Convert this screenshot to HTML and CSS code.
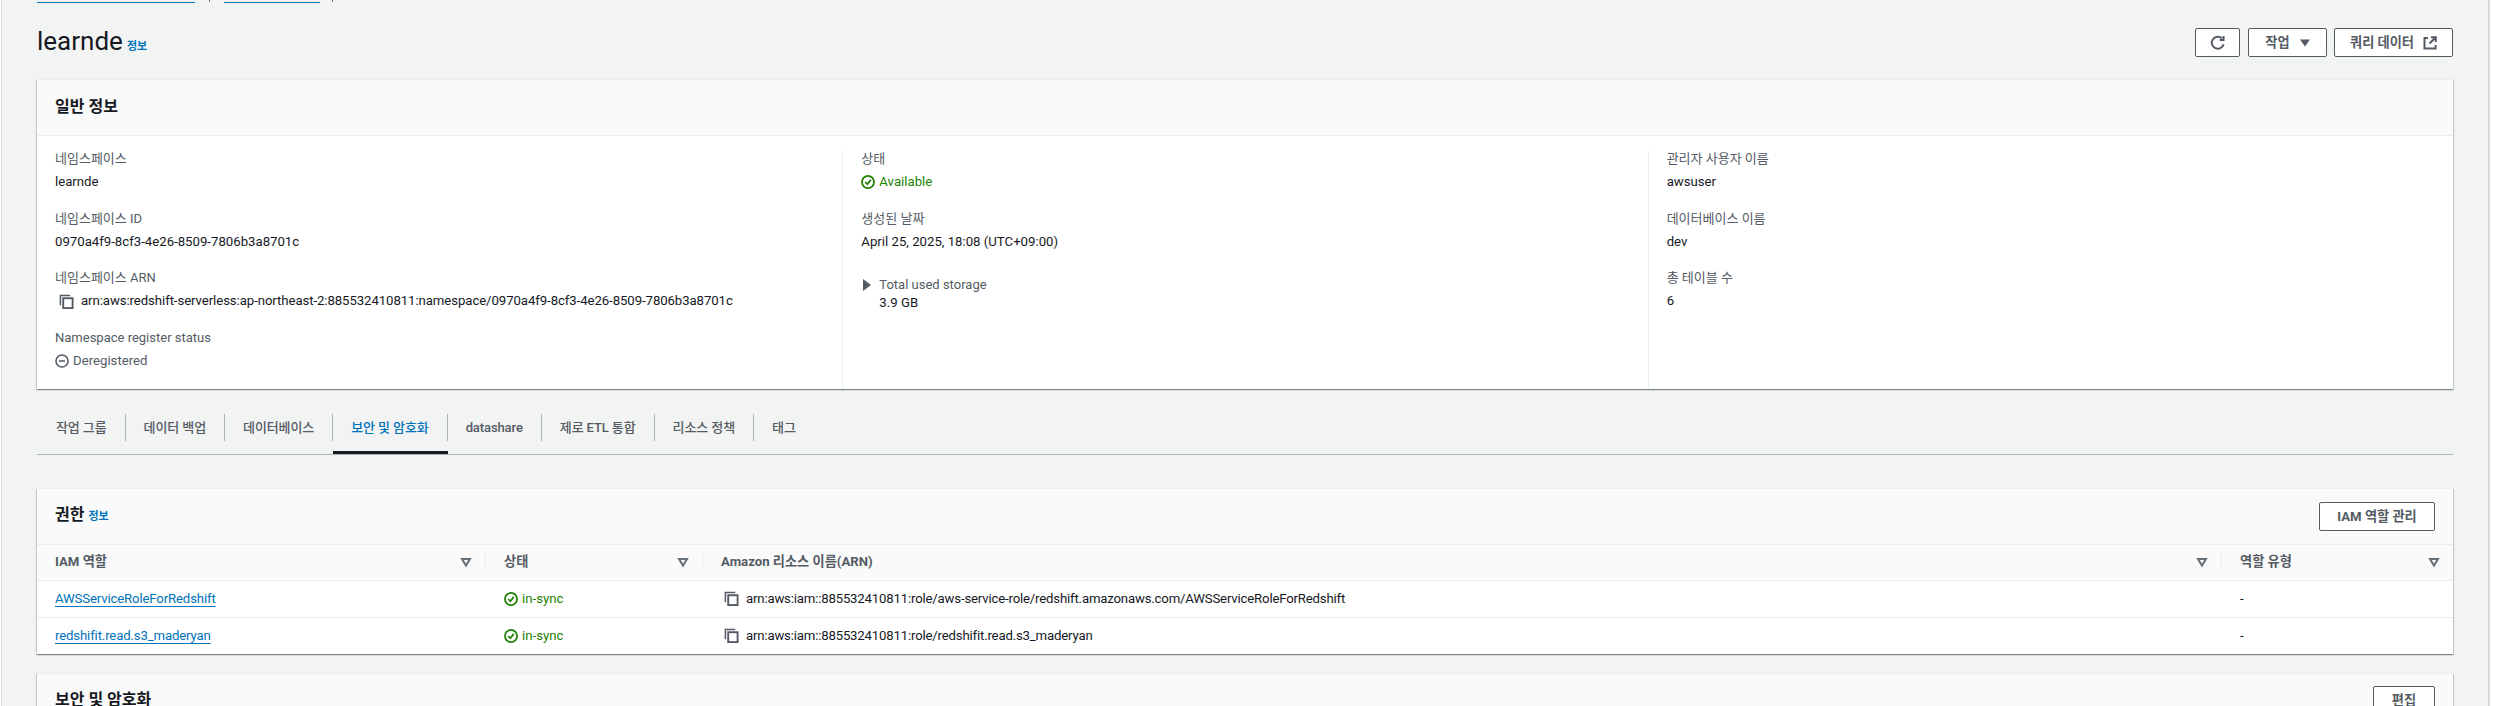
FILE: index.html
```html
<!DOCTYPE html>
<html lang="ko">
<head>
    <meta charset="UTF-8">
    <meta name="viewport" content="width=device-width, initial-scale=1.0">
    <title>learnde - Redshift Serverless</title>
    <link rel="stylesheet" href="styles.css">
</head>
<body>
    <svg class="icon-defs" aria-hidden="true">
        <symbol id="i-copy" viewBox="0 0 16 16">
            <path d="M1.5 12V1.5H12" fill="none" stroke="currentColor" stroke-width="1.6"/>
            <rect x="4.5" y="4.5" width="10" height="10.5" fill="none" stroke="currentColor" stroke-width="2"/>
        </symbol>
        <symbol id="i-ok" viewBox="0 0 16 16">
            <circle cx="8" cy="8" r="6.9" fill="none" stroke="currentColor" stroke-width="2"/>
            <path d="M4.8 8l2.4 2.6 4-5" fill="none" stroke="currentColor" stroke-width="2"/>
        </symbol>
        <symbol id="i-stopped" viewBox="0 0 16 16">
            <circle cx="8" cy="8" r="6.9" fill="none" stroke="currentColor" stroke-width="1.8"/>
            <path d="M4.5 8h7" fill="none" stroke="currentColor" stroke-width="1.8"/>
        </symbol>
        <symbol id="i-sort" viewBox="0 0 12 12">
            <path d="M2 3h8L6 9.5z" fill="none" stroke="currentColor" stroke-width="2"/>
        </symbol>
    </svg>

    <div class="page">
        <nav class="breadcrumbs">
            <a href="#" class="crumb crumb-service" aria-label="Amazon Redshift Serverless"></a>
            <span class="crumb-sep"></span>
            <a href="#" class="crumb crumb-list" aria-label="네임스페이스 구성"></a>
            <span class="crumb-sep"></span>
        </nav>

        <header class="page-header">
            <div class="page-title">
                <h1>learnde</h1>
                <a href="#" class="info-link">정보</a>
            </div>
            <div class="page-actions">
                <button class="btn btn-refresh" aria-label="새로 고침">
                    <svg width="16" height="16" viewBox="0 0 16 16"><path d="M13.6 9.2A6 6 0 1 1 12 3.4M13.6 1v4h-4" fill="none" stroke="currentColor" stroke-width="2"/></svg>
                </button>
                <button class="btn btn-actions">작업
                    <svg width="10" height="8" viewBox="0 0 10 8"><path d="M0 .5h10L5 7.5z" fill="currentColor"/></svg>
                </button>
                <button class="btn btn-query">쿼리 데이터
                    <svg width="14" height="14" viewBox="0 0 14 14"><path d="M5 2H1.5v10.5h11V9M8 1.2h4.8V6M12.5 1.5L6.5 7.5" fill="none" stroke="currentColor" stroke-width="2"/></svg>
                </button>
            </div>
        </header>

        <section class="card">
            <div class="card-header">
                <h2>일반 정보</h2>
            </div>
            <div class="info-grid">
                <div class="info-col">
                    <div class="field">
                        <div class="field-label">네임스페이스</div>
                        <div class="field-value">learnde</div>
                    </div>
                    <div class="field">
                        <div class="field-label">네임스페이스 ID</div>
                        <div class="field-value">0970a4f9-8cf3-4e26-8509-7806b3a8701c</div>
                    </div>
                    <div class="field">
                        <div class="field-label">네임스페이스 ARN</div>
                        <div class="field-value copy-value">
                            <svg class="icon-copy"><use href="#i-copy"/></svg>
                            arn:aws:redshift-serverless:ap-northeast-2:885532410811:namespace/0970a4f9-8cf3-4e26-8509-7806b3a8701c
                        </div>
                    </div>
                    <div class="field">
                        <div class="field-label">Namespace register status</div>
                        <div class="field-value status status-muted">
                            <svg class="icon-status"><use href="#i-stopped"/></svg>
                            Deregistered
                        </div>
                    </div>
                </div>
                <div class="info-col">
                    <div class="field">
                        <div class="field-label">상태</div>
                        <div class="field-value status status-ok">
                            <svg class="icon-status"><use href="#i-ok"/></svg>
                            Available
                        </div>
                    </div>
                    <div class="field">
                        <div class="field-label">생성된 날짜</div>
                        <div class="field-value">April 25, 2025, 18:08 (UTC+09:00)</div>
                    </div>
                    <div class="field expander">
                        <div class="field-label">
                            <svg class="icon-caret" width="8" height="12" viewBox="0 0 8 12"><path d="M0 0l8 6-8 6z" fill="currentColor"/></svg>
                            Total used storage
                        </div>
                        <div class="field-value expander-value">3.9 GB</div>
                    </div>
                </div>
                <div class="info-col">
                    <div class="field">
                        <div class="field-label">관리자 사용자 이름</div>
                        <div class="field-value">awsuser</div>
                    </div>
                    <div class="field">
                        <div class="field-label">데이터베이스 이름</div>
                        <div class="field-value">dev</div>
                    </div>
                    <div class="field">
                        <div class="field-label">총 테이블 수</div>
                        <div class="field-value">6</div>
                    </div>
                </div>
            </div>
        </section>

        <div class="tabs">
            <a href="#" class="tab"><span class="tab-label">작업 그룹</span></a>
            <a href="#" class="tab"><span class="tab-label">데이터 백업</span></a>
            <a href="#" class="tab"><span class="tab-label">데이터베이스</span></a>
            <a href="#" class="tab tab-active"><span class="tab-label">보안 및 암호화</span></a>
            <a href="#" class="tab"><span class="tab-label">datashare</span></a>
            <a href="#" class="tab"><span class="tab-label">제로 ETL 통합</span></a>
            <a href="#" class="tab"><span class="tab-label">리소스 정책</span></a>
            <a href="#" class="tab"><span class="tab-label tab-last">태그</span></a>
        </div>

        <section class="card card-perms">
            <div class="card-header card-header-row">
                <h2>권한 <a href="#" class="info-link">정보</a></h2>
                <button class="btn btn-iam">IAM 역할 관리</button>
            </div>
            <table class="role-table">
                <thead>
                    <tr>
                        <th class="col-role"><div class="th-inner">IAM 역할<svg class="icon-sort"><use href="#i-sort"/></svg></div></th>
                        <th class="col-state"><div class="th-inner">상태<svg class="icon-sort"><use href="#i-sort"/></svg></div></th>
                        <th class="col-arn"><div class="th-inner">Amazon 리소스 이름(ARN)<svg class="icon-sort"><use href="#i-sort"/></svg></div></th>
                        <th class="col-type"><div class="th-inner">역할 유형<svg class="icon-sort"><use href="#i-sort"/></svg></div></th>
                    </tr>
                </thead>
                <tbody>
                    <tr>
                        <td><a href="#" class="role-link">AWSServiceRoleForRedshift</a></td>
                        <td><span class="status status-ok"><svg class="icon-status"><use href="#i-ok"/></svg>in-sync</span></td>
                        <td><span class="copy-value copy-cell"><svg class="icon-copy"><use href="#i-copy"/></svg>arn:aws:iam::885532410811:role/aws-service-role/redshift.amazonaws.com/AWSServiceRoleForRedshift</span></td>
                        <td>-</td>
                    </tr>
                    <tr>
                        <td><a href="#" class="role-link">redshifit.read.s3_maderyan</a></td>
                        <td><span class="status status-ok"><svg class="icon-status"><use href="#i-ok"/></svg>in-sync</span></td>
                        <td><span class="copy-value copy-cell"><svg class="icon-copy"><use href="#i-copy"/></svg>arn:aws:iam::885532410811:role/redshifit.read.s3_maderyan</span></td>
                        <td>-</td>
                    </tr>
                </tbody>
            </table>
        </section>

        <section class="card card-security">
            <div class="card-header card-header-row">
                <h2>보안 및 암호화</h2>
                <button class="btn btn-edit">편집</button>
            </div>
        </section>
    </div>
</body>
</html>
```

FILE: styles.css
```css
* {
    margin: 0;
    padding: 0;
    box-sizing: border-box;
}

html, body {
    height: 706px;
    overflow: hidden;
}

body {
    font-family: Roboto, 'Noto Sans CJK KR', sans-serif;
    font-size: 13.2px;
    line-height: 20px;
    color: #16191f;
    background: #fff;
}

a {
    color: #0073bb;
    text-decoration: none;
}

.icon-defs {
    display: none;
}

.page {
    width: 2489px;
    height: 706px;
    margin-left: 1px;
    padding: 0 35px;
    overflow: hidden;
    background: #f2f3f3;
    border-left: 1px solid #d5dbdb;
    border-right: 2px solid #d5dbdb;
}

/* breadcrumbs are scrolled almost off the top, only the link underlines show */
.breadcrumbs {
    display: flex;
    height: 3px;
    overflow: hidden;
}

.crumb {
    flex: none;
    height: 3px;
    border-bottom: 1px solid #0073bb;
}

.crumb-service { width: 158px; }
.crumb-list { width: 96px; }

.crumb-sep {
    display: flex;
    justify-content: center;
    width: 29px;
    height: 2px;
}

.crumb-sep::after {
    content: "";
    width: 1px;
    background: #687078;
}

.crumb-list + .crumb-sep {
    width: 24px;
}

.page-header {
    display: flex;
    justify-content: space-between;
    align-items: flex-start;
    height: 76px;
    padding-top: 25px;
}

.page-title {
    display: flex;
    align-items: baseline;
    gap: 4px;
    margin-top: -5px;
}

.page-title h1 {
    font-size: 26px;
    line-height: 36px;
    font-weight: 400;
}

.info-link {
    font-size: 11px;
    font-weight: 700;
}

.page-actions {
    display: flex;
    gap: 8px;
}

.btn {
    display: inline-flex;
    align-items: center;
    justify-content: center;
    height: 29px;
    font: inherit;
    font-weight: 700;
    color: #545b64;
    background: #fff;
    border: 1px solid #545b64;
    border-radius: 2px;
}

.btn-refresh { width: 45px; }
.btn-actions { width: 79px; gap: 10px; margin-right: -1px; }
.btn-query { width: 119px; gap: 9px; }
.btn-iam { width: 116px; }
.btn-edit { width: 62px; }

.card {
    background: #fff;
    border-top: 1px solid #eaeded;
    box-shadow: 0 1px 1px 0 rgba(0, 28, 36, 0.3), 1px 1px 1px 0 rgba(0, 28, 36, 0.15), -1px 1px 1px 0 rgba(0, 28, 36, 0.15);
}

.card-header {
    display: flex;
    align-items: center;
    height: 56px;
    padding: 0 18px;
    background: #fafafa;
    border-bottom: 1px solid #eaeded;
}

.card-header h2 {
    margin-top: -2px;
    font-size: 16px;
    font-weight: 700;
    line-height: 16px;
}

.card-header h2 .info-link {
    font-size: 11px;
}

.card-header-row {
    justify-content: space-between;
}

.card-security .card-header {
    align-items: flex-start;
    padding-top: 12px;
}

.card-security .card-header h2 {
    margin-top: 6px;
}

.info-grid {
    display: grid;
    grid-template-columns: repeat(3, 1fr);
    height: 253px;
    padding: 15px 0 18px;
}

.info-col {
    padding: 0 18px;
    border-left: 1px solid #eaeded;
}

.info-col:first-child {
    border-left: none;
}

.field {
    height: 59.6px;
}

.field-label {
    height: 22px;
    font-size: 13px;
    line-height: 16px;
    color: #545b64;
}

.field-value {
    height: 22px;
    line-height: 18px;
}

.copy-value {
    display: flex;
    align-items: center;
    gap: 7px;
    padding-left: 4px;
    letter-spacing: -0.08px;
}

.field-value.copy-value {
    height: 18px;
}

.icon-copy {
    flex: none;
    width: 15px;
    height: 15px;
    color: #545b64;
}

.status {
    display: flex;
    align-items: center;
    gap: 4px;
}

.field-value.status {
    height: 18px;
}

.status-ok { color: #1d8102; }
.status-muted { color: #545b64; }

.icon-status {
    flex: none;
    width: 14px;
    height: 14px;
}

.expander .field-label {
    display: flex;
    align-items: center;
    gap: 8px;
    height: 21px;
    margin-top: 4px;
    padding-left: 2px;
}

.icon-caret {
    flex: none;
    color: #545b64;
}

.expander-value {
    margin-top: -1px;
    padding-left: 18px;
}

.tabs {
    display: flex;
    margin-top: 25px;
    padding-left: 1px;
    border-bottom: 1px solid #aab7b8;
}

.tab {
    display: block;
    padding-bottom: 10px;
    font-size: 13px;
    font-weight: 500;
    letter-spacing: -0.1px;
    color: #545b64;
    border-bottom: 3px solid transparent;
}

.tab-label {
    display: flex;
    align-items: center;
    height: 27px;
    padding: 0 18px;
    border-right: 1px solid #aab7b8;
}

.tab-last {
    border-right: none;
}

.tab-active {
    color: #0073bb;
    border-bottom-color: #16191f;
}

.card-perms {
    margin-top: 33px;
}

.role-table {
    width: 100%;
    border-collapse: collapse;
    table-layout: fixed;
}

.role-table th {
    height: 35px;
    padding: 0;
    text-align: left;
    color: #545b64;
    background: #fafafa;
    border-bottom: 1px solid #eaeded;
}

.col-role { width: 449px; }
.col-state { width: 217px; }
.col-arn { width: 1519px; }

.th-inner {
    display: flex;
    justify-content: space-between;
    align-items: center;
    height: 18px;
    padding: 0 13px 0 18px;
    border-right: 1px solid #eaeded;
}

.col-type .th-inner {
    border-right: none;
}

.icon-sort {
    flex: none;
    width: 12px;
    height: 12px;
    color: #687078;
}

.role-table td {
    height: 37px;
    padding: 0 18px;
    border-bottom: 1px solid #eaeded;
}

.role-table tr:last-child td {
    border-bottom: none;
}

.copy-cell {
    padding-left: 3px;
    letter-spacing: -0.18px;
}

.role-link {
    letter-spacing: -0.15px;
    text-decoration: underline;
    text-underline-offset: 3px;
}

.card-security {
    margin-top: 19px;
}
```
